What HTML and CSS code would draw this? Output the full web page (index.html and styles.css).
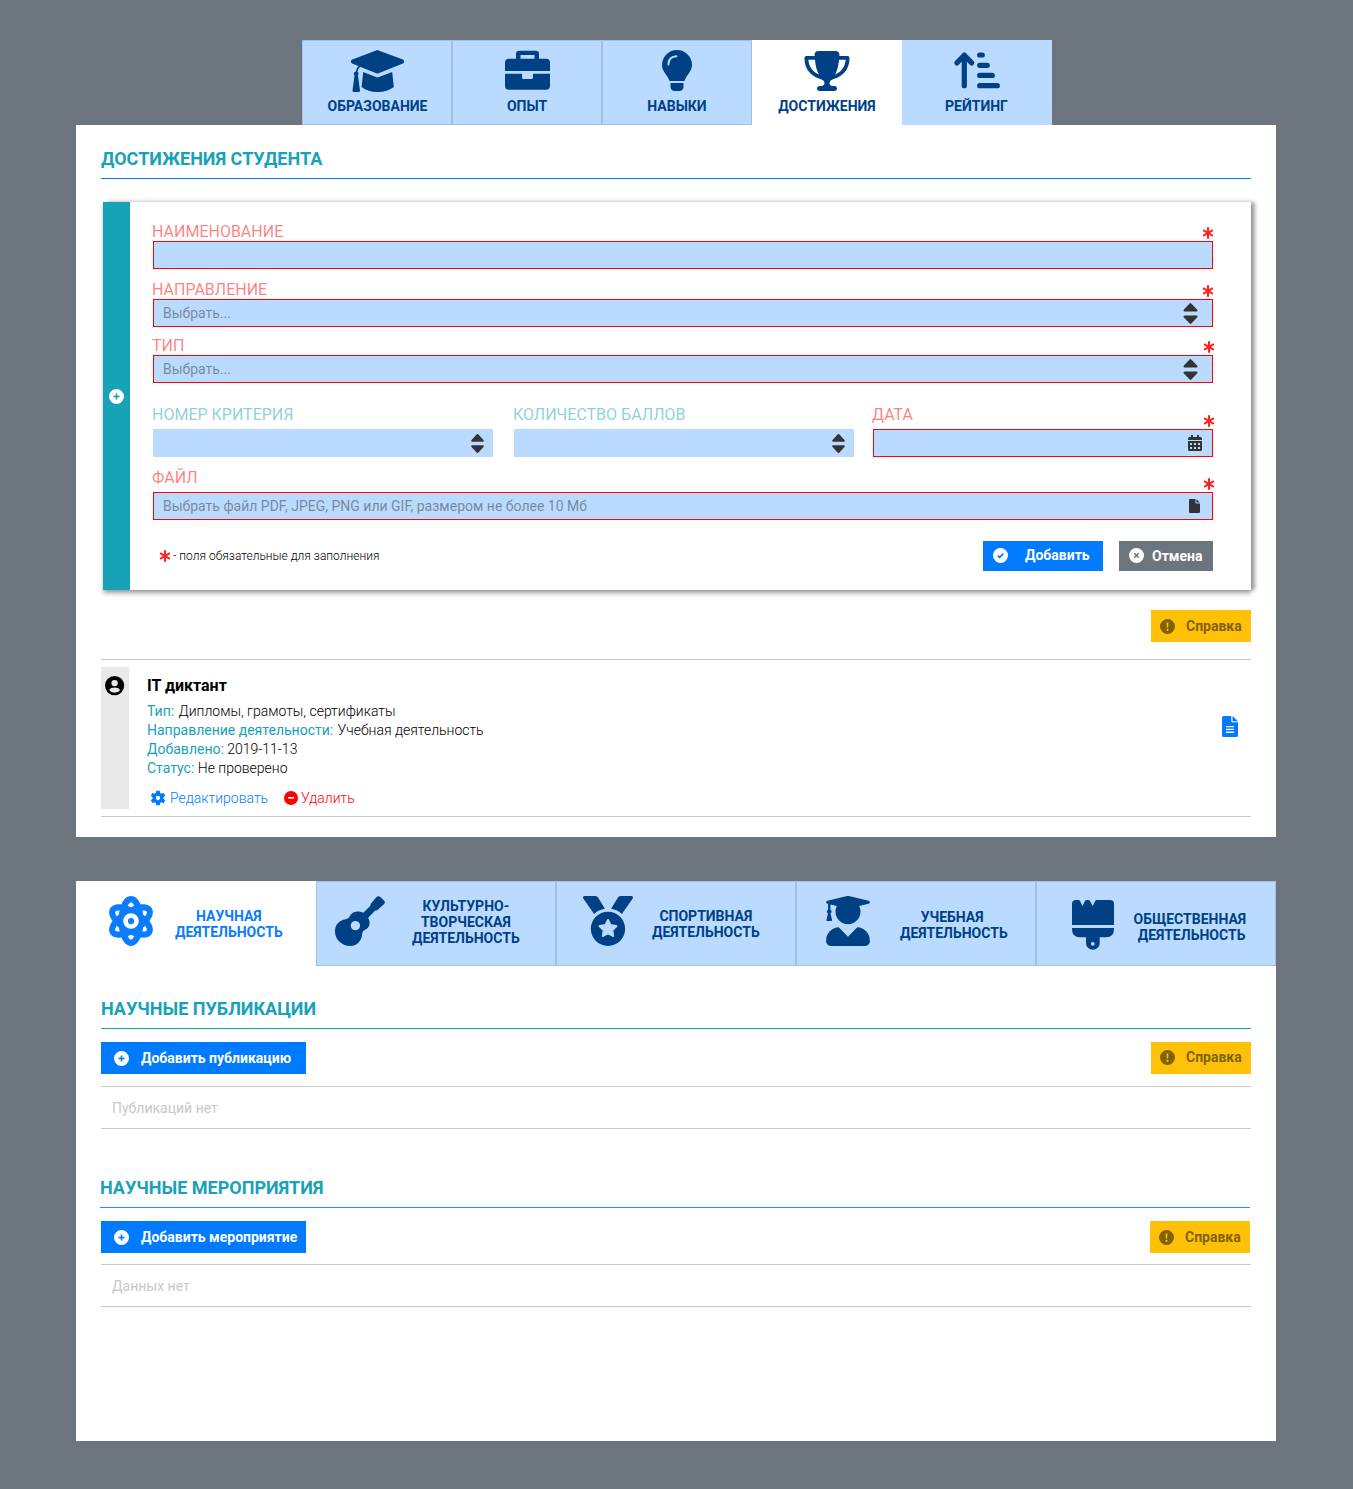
FILE: index.html
```html
<!DOCTYPE html>
<html lang="ru">
<head>
<meta charset="utf-8">
<title>Портфолио студента</title>
<link rel="stylesheet" href="styles.css">
</head>
<body>
<svg class="sprite" width="0" height="0">
  <defs>
    <symbol id="star" viewBox="0 0 12 12"><path d="M6 .3V11.700M1.100 3.200 10.900 8.800M10.900 3.200 1.100 8.800" fill="none" stroke="currentColor" stroke-width="2.100"/></symbol>
    <symbol id="sort" viewBox="0 0 14 21"><path d="M6.200.4Q7-.3 7.800.4L13.600 6.600Q14.600 8.400 13 8.500H1Q-.6 8.400.4 6.600ZM6.200 20.600Q7 21.300 7.800 20.600L13.600 14.400Q14.600 12.600 13 12.500H1Q-.6 12.600.4 14.400Z" fill="#333"/></symbol>
    <symbol id="plus" viewBox="0 0 15 15"><path fill-rule="evenodd" d="M7.500 0a7.500 7.500 0 1 0 0 15a7.500 7.500 0 0 0 0-15ZM6.700 4.400h1.600v2.300h2.300v1.600H8.300v2.300H6.700V8.300H4.400V6.700h2.300Z" fill="currentColor"/></symbol>
    <symbol id="alert" viewBox="0 0 15 15"><path fill-rule="evenodd" d="M7.500 0a7.500 7.500 0 1 0 0 15a7.500 7.500 0 0 0 0-15ZM6.500 3.400h2l-.4 5.200h-1.200ZM7.500 9.700a1.100 1.100 0 1 1 0 2.200a1.100 1.100 0 0 1 0-2.200Z" fill="currentColor"/></symbol>
  </defs>
</svg>

<main class="page">
  <nav class="tabs">
    <a class="tab tab-first"><svg class="tab-icon" viewBox="0 0 56 44"><path d="M28.400 2.600 53.300 12 Q54 12.500 53.300 13L28.400 23 3.700 13Q3 12.500 3.700 12Z" stroke="currentColor" stroke-width="3" stroke-linejoin="round"/><path d="M14.200 23 27 28Q28.500 28.600 30 28L43.200 23 44.800 38Q38.500 43 28.700 43 18.500 43 12.600 38Z"/><path d="M11 17Q8 19 7.400 24" fill="none" stroke="currentColor" stroke-width="1.600"/><circle cx="7.200" cy="24.800" r="2.400"/><path d="M5.500 26.500H9L11 41.500Q11 43 9.500 43H5Q3.300 43 3.500 41.500Z"/></svg><span>ОБРАЗОВАНИЕ</span></a>
    <a class="tab"><svg class="tab-icon" viewBox="0 0 56 44"><path fill-rule="evenodd" d="M17 9.700V5Q17 1.700 20.300 1.700H36.700Q40 1.700 40 5V9.700H47Q51 9.700 51 13.500V22H6V13.500Q6 9.700 10 9.700ZM21.500 6V9.700H35.500V6ZM6 24.700H23V28.500Q23 30 24.500 30H32.500Q34 30 34 28.500V24.700H51V37Q51 40.700 47 40.700H10Q6 40.700 6 37Z"/></svg><span>ОПЫТ</span></a>
    <a class="tab"><svg class="tab-icon" viewBox="0 0 56 44"><path d="M28 1A15 15 0 0 1 43 16C43 23 37 26 35.500 32H20.500C19 26 13 23 13 16A15 15 0 0 1 28 1Z"/><path d="M21.500 34H34.500V38Q34 42 30.500 42H25.500Q22 42 21.500 38Z"/><path d="M19.400 15.500Q19.600 7.600 27.500 7.300" fill="none" stroke="#badbff" stroke-width="1.900" stroke-linecap="round"/></svg><span>НАВЫКИ</span></a>
    <a class="tab tab-active"><svg class="trophy" viewBox="0 0 576 512"><path d="M400 0H176c-26.500 0-48.100 21.800-47.100 48.200c.2 5.300 .4 10.600 .7 15.800H24C10.700 64 0 74.700 0 88c0 92.600 33.500 157 78.500 200.700c44.300 43.100 98.300 64.800 138.100 75.800c23.400 6.500 39.400 26 39.400 45.600c0 20.900-17 37.900-37.900 37.900H192c-17.700 0-32 14.300-32 32s14.300 32 32 32H384c17.700 0 32-14.300 32-32s-14.300-32-32-32H357.900C337 448 320 431 320 410.100c0-19.600 15.900-39.200 39.400-45.600c39.900-11 93.900-32.700 138.200-75.800C542.500 245 576 180.600 576 88c0-13.300-10.700-24-24-24H446.400c.3-5.200 .5-10.400 .7-15.800C448.100 21.800 426.500 0 400 0zM48.900 112h84.400c9.100 90.100 29.200 150.300 51.900 190.600c-24.900-11-50.800-26.500-73.200-48.300c-32-31.100-58-76-63-142.300zM464.100 254.300c-22.400 21.800-48.300 37.300-73.200 48.300c22.700-40.300 42.800-100.500 51.900-190.600h84.400c-5.100 66.300-31.100 111.200-63 142.300z"/></svg><span>ДОСТИЖЕНИЯ</span></a>
    <a class="tab tab-plain"><svg class="tab-icon" viewBox="0 0 56 44"><path d="M15.300 6V36.700M7.900 13.900 15.300 6.300 22.700 13.900M30.700 6H33.300M30.700 16.300H38.300M30.700 26.400H43.300M30.700 36.700H48.300" fill="none" stroke="currentColor" stroke-width="5.200" stroke-linecap="round" stroke-linejoin="round"/></svg><span>РЕЙТИНГ</span></a>
  </nav>

  <section class="panel panel-student">
    <h2 class="heading heading-blue">ДОСТИЖЕНИЯ СТУДЕНТА</h2>
    <div class="card">
      <div class="card-side"><svg width="15" height="15"><use href="#plus"/></svg></div>
      <form class="form">
        <div class="field g12"><div class="head"><label class="req">НАИМЕНОВАНИЕ</label><svg class="star" width="12" height="12"><use href="#star"/></svg></div><div class="input input-req"></div></div>
        <div class="field g10"><div class="head"><label class="req">НАПРАВЛЕНИЕ</label><svg class="star" width="12" height="12"><use href="#star"/></svg></div><div class="input input-req"><span>Выбрать...</span><svg class="sort-big" width="15" height="21"><use href="#sort"/></svg></div></div>
        <div class="field g22"><div class="head"><label class="req">ТИП</label><svg class="star shift" width="12" height="12"><use href="#star"/></svg></div><div class="input input-req"><span>Выбрать...</span><svg class="sort-big" width="15" height="21"><use href="#sort"/></svg></div></div>
        <div class="columns">
          <div class="field"><div class="head tall"><label>НОМЕР КРИТЕРИЯ</label></div><div class="input"><span></span><svg class="sort-small" width="13" height="19"><use href="#sort"/></svg></div></div>
          <div class="field col-points"><div class="head tall"><label>КОЛИЧЕСТВО БАЛЛОВ</label></div><div class="input"><span></span><svg class="sort-small" width="13" height="19"><use href="#sort"/></svg></div></div>
          <div class="field"><div class="head tall"><label class="req">ДАТА</label><svg class="star shift" width="12" height="12"><use href="#star"/></svg></div><div class="input input-req"><span></span><svg class="calendar" width="14" height="16" viewBox="0 0 14 16"><path fill="#333" fill-rule="evenodd" d="M3 0H5V2H9V0H11V2H12.500Q14 2 14 3.500V5H0V3.500Q0 2 1.500 2H3ZM0 6H14V14.500Q14 16 12.500 16H1.500Q0 16 0 14.500ZM2 8V10H4V8ZM6 8V10H8V8ZM10 8V10H12V8ZM2 12V14H4V12ZM6 12V14H8V12ZM10 12V14H12V12Z"/></svg></div></div>
        </div>
        <div class="field"><div class="head tall"><label class="req">ФАЙЛ</label><svg class="star shift" width="12" height="12"><use href="#star"/></svg></div><div class="input input-req"><span>Выбрать файл PDF, JPEG, PNG или GIF, размером не более 10 Мб</span><svg class="file" width="11" height="14" viewBox="0 0 11 14"><path fill="#333" d="M1 0H6.500V3.500Q6.500 4.500 7.500 4.500H11V13Q11 14 10 14H1Q0 14 0 13V1Q0 0 1 0ZM7.400.2 10.800 3.600H7.400Z"/></svg></div></div>
        <div class="form-foot">
          <svg class="star-note" width="12" height="12"><use href="#star"/></svg><span class="note">- поля обязательные для заполнения</span>
          <button type="button" class="btn btn-add"><svg width="15" height="15" viewBox="0 0 15 15"><circle cx="7.500" cy="7.500" r="7.500" fill="#fff"/><path d="M4.700 7.600 6.600 9.400 10.400 5.600" fill="none" stroke="#007bff" stroke-width="1.600"/></svg><span>Добавить</span></button>
          <button type="button" class="btn btn-cancel"><svg width="15" height="15" viewBox="0 0 15 15"><circle cx="7.500" cy="7.500" r="7.500" fill="#fff"/><path d="M5.300 5.300 9.700 9.700M9.700 5.300 5.300 9.700" stroke="#6c757d" stroke-width="1.600"/></svg><span>Отмена</span></button>
        </div>
      </form>
    </div>
    <div class="help-row"><button type="button" class="btn btn-help"><svg width="15" height="15"><use href="#alert"/></svg><span>Справка</span></button></div>
    <article class="item">
      <div class="item-side"><svg width="20" height="20" viewBox="0 0 20 20"><path fill-rule="evenodd" d="M9.600 0a9.600 9.600 0 1 0 0 19.200a9.600 9.600 0 0 0 0-19.200ZM9.600 3.900a3.200 3.200 0 1 1 0 6.400a3.200 3.200 0 0 1 0-6.400ZM4 13.900Q5.600 11.600 9.600 11.600 13.600 11.600 15.200 13.900 13.100 16.700 9.600 16.700 6.100 16.700 4 13.900Z"/></svg></div>
      <div class="item-body">
        <h3>IT диктант</h3>
        <p><b class="wide">Тип:</b> Дипломы, грамоты, сертификаты</p>
        <p><b class="wide">Направление деятельности:</b> Учебная деятельность</p>
        <p><b>Добавлено:</b> 2019-11-13</p>
        <p><b>Статус:</b> Не проверено</p>
        <div class="actions">
          <a class="edit"><svg width="16" height="16" viewBox="1.500 1.500 21 21"><path fill="currentColor" d="M19.140 12.940c.04-.3.06-.61.06-.94c0-.32-.02-.64-.07-.94l2.030-1.580c.18-.14.23-.41.12-.61l-1.920-3.320c-.12-.22-.37-.29-.59-.22l-2.390.96c-.5-.38-1.030-.7-1.620-.94L14.400 2.810c-.04-.24-.24-.41-.48-.41h-3.840c-.24 0-.43.17-.47.41L9.250 5.350C8.660 5.590 8.120 5.920 7.630 6.290L5.240 5.330c-.22-.08-.47 0-.59.22L2.740 8.870C2.620 9.080 2.660 9.340 2.860 9.480l2.030 1.580C4.840 11.360 4.800 11.690 4.800 12s.02.64.07.94l-2.030 1.580c-.18.14-.23.41-.12.61l1.920 3.320c.12.22.37.29.59.22l2.390-.96c.5.38 1.030.7 1.620.94l.36 2.540c.05.24.24.41.48.41h3.840c.24 0 .44-.17.47-.41l.36-2.540c.59-.24 1.130-.56 1.620-.94l2.390.96c.22.08.47 0 .59-.22l1.920-3.320c.12-.22.07-.47-.12-.61L19.140 12.940zM12 14.800c-1.550 0-2.800-1.250-2.800-2.800s1.250-2.800 2.800-2.800s2.800 1.250 2.800 2.800S13.550 14.800 12 14.800z"/></svg><span>Редактировать</span></a>
          <a class="delete"><svg width="14" height="14" viewBox="0 0 14 14"><circle cx="7" cy="7" r="7" fill="red"/><path d="M4 6.800H10" stroke="#fff" stroke-width="1.600"/></svg><span>Удалить</span></a>
        </div>
      </div>
      <svg class="doc" width="16" height="21" viewBox="0 0 16 21"><path fill="#007bff" fill-rule="evenodd" d="M1.500 0H9.300V5Q9.300 6.200 10.500 6.200H16V19.500Q16 21 14.500 21H1.500Q0 21 0 19.500V1.500Q0 0 1.500 0ZM10.500 0 16 5.200H10.500ZM4 10V11.300H12V10ZM4 12.800V14.100H12V12.800ZM4 15.600V16.900H12V15.600Z"/></svg>
    </article>
  </section>

  <section class="panel panel-science">
    <nav class="areas">
      <a class="area area-active"><svg width="44" height="50" viewBox="0 0 448 512"><path d="M223.999 224a32 32 0 1 0 32.008 32A32.064 32.064 0 0 0 223.999 224Zm214.172-96c-10.877-19.500-40.510-50.750-116.275-41.875C300.392 34.875 267.634 0 223.999 0s-76.391 34.875-97.897 86.125C50.337 77.375 20.706 108.500 9.829 128-6.550 157.375-5.175 201.125 34.958 256-5.175 310.875-6.550 354.625 9.829 384c29.131 52.375 101.647 43.625 116.273 41.875C147.608 477.125 180.364 512 223.999 512s76.393-34.875 97.897-86.125c14.629 1.750 87.145 10.500 116.275-41.875C454.550 354.625 453.175 310.875 413.040 256 453.175 201.125 454.550 157.375 438.171 128ZM63.339 352c-4-7.250-.125-24.750 15.004-48.250 6.877 6.500 14.129 12.875 21.881 19.125 1.625 13.750 4 27.125 6.750 40.125C82.345 363.875 67.091 358.625 63.339 352Zm36.885-162.875c-7.752 6.250-15.004 12.625-21.881 19.125-15.129-23.500-19.004-41-15.004-48.250 3.377-6.125 16.379-11.500 37.885-11.500 1.750 0 3.875.375 5.750.375C104.099 162.250 101.849 175.625 100.224 189.125ZM223.999 64c9.502 0 22.256 13.500 33.883 37.250-11.252 3.750-22.504 8-33.883 12.875-11.377-4.875-22.629-9.125-33.883-12.875C201.745 77.500 214.497 64 223.999 64Zm0 384c-9.502 0-22.254-13.500-33.883-37.250 11.254-3.750 22.506-8 33.883-12.875C235.378 402.750 246.630 407 257.882 410.750 246.255 434.500 233.501 448 223.999 448Zm0-112a80 80 0 1 1 80-80A80 80 0 0 1 223.999 336ZM384.659 352c-3.625 6.625-19.004 11.875-43.635 11 2.752-13 5.127-26.375 6.752-40.125 7.752-6.250 15.004-12.625 21.879-19.125C384.784 327.250 388.659 344.750 384.659 352ZM369.655 208.250c-6.875-6.500-14.127-12.875-21.879-19.125-1.625-13.500-3.875-26.875-6.752-40.250 1.875 0 4.002-.375 5.752-.375 21.504 0 34.508 5.375 37.883 11.500C388.659 167.250 384.784 184.750 369.655 208.250Z"/></svg><span>НАУЧНАЯ<br>ДЕЯТЕЛЬНОСТЬ</span></a>
      <a class="area area-culture"><svg width="50" height="50" viewBox="0 0 50 50"><path fill-rule="evenodd" d="M36 7.600 41.300 1.300Q43.200-.7 45.400 1L49 4.600Q50.900 6.600 48.600 8.600L42.500 13.900Q41.500 14.700 40.300 14.600L33.200 21.700Q35.500 26 34 30C32 34.500 27.500 33.500 27.200 37.500C27 44 22.500 50 15.500 50C7 50 0 44 0 35.300C0 29 4 24.700 9.500 23.600C14 22.800 14.300 20.800 15.700 18.700C18.500 14.800 24.500 15 28.300 16.800L35.400 9.700Q35.300 8.600 36 7.600ZM20.400 24.900a4.700 4.700 0 1 0 0 9.400a4.700 4.700 0 0 0 0-9.400Z"/></svg><span>КУЛЬТУРНО-<br>ТВОРЧЕСКАЯ<br>ДЕЯТЕЛЬНОСТЬ</span></a>
      <a class="area area-sport"><svg width="50" height="50" viewBox="0 0 512 512"><path d="M223.750 130.750L154.620 15.540A31.997 31.997 0 0 0 127.180 0H16.030C3.080 0-4.500 14.570 2.920 25.180l111.270 158.960c29.720-27.770 67.520-46.830 109.560-53.390zM495.970 0H384.820c-11.240 0-21.660 5.900-27.440 15.540l-69.130 115.210c42.040 6.560 79.840 25.620 109.560 53.380L509.080 25.180C516.500 14.570 508.920 0 495.970 0zM256 160c-97.200 0-176 78.800-176 176s78.800 176 176 176 176-78.800 176-176-78.800-176-176-176zm92.520 157.260l-37.930 36.960 8.970 52.220c1.600 9.360-8.260 16.510-16.650 12.090L256 393.880l-46.900 24.650c-8.400 4.450-18.250-2.740-16.650-12.090l8.970-52.220-37.930-36.960c-6.820-6.640-3.050-18.230 6.350-19.590l52.430-7.640 23.430-47.520c2.110-4.280 6.190-6.390 10.280-6.390 4.110 0 8.220 2.140 10.330 6.390l23.430 47.520 52.430 7.640c9.400 1.360 13.170 12.950 6.350 19.590z"/></svg><span>СПОРТИВНАЯ<br>ДЕЯТЕЛЬНОСТЬ</span></a>
      <a class="area area-study"><svg width="44" height="50" viewBox="0 0 448 512"><path d="M319.400 320.600L224 416l-95.400-95.400C57.100 323.700 0 382.200 0 454.400v9.600c0 26.500 21.500 48 48 48h352c26.500 0 48-21.500 48-48v-9.600c0-72.200-57.100-130.700-128.600-133.800zM13.600 79.800l6.400 1.500v58.400c-7 4.200-12 11.500-12 20.300 0 8.400 4.600 15.400 11.100 19.700L3.500 242c-1.700 6.900 2.100 14 7.600 14h41.800c5.500 0 9.300-7.100 7.600-14l-15.600-62.300C51.400 175.400 56 168.400 56 160c0-8.800-5-16.100-12-20.300V87.100l66 15.900c-8.600 17.200-14 36.400-14 57 0 70.700 57.300 128 128 128s128-57.300 128-128c0-20.600-5.300-39.800-14-57l96.300-23.200c18.200-4.400 18.200-27.100 0-31.500l-190.400-46c-13-3.100-26.700-3.100-39.700 0L13.600 48.200c-18.100 4.400-18.100 27.100 0 31.600z"/></svg><span>УЧЕБНАЯ&nbsp;<br>ДЕЯТЕЛЬНОСТЬ</span></a>
      <a class="area area-social"><svg width="42" height="50" viewBox="0 0 42 50"><path fill-rule="evenodd" d="M4 0H6.500Q7.500 0 8 1L10.500 6 13 1Q13.500 0 14.500 0H16.500Q17.500 0 18 1L20.700 6 23.200 1Q23.700 0 24.700 0H38Q42 0 42 4V25H0V4Q0 0 4 0ZM0 28H42V29Q42 37.300 34 37.300H27.700V43A6.850 6.850 0 0 1 14 43V37.300H8Q0 37.300 0 29ZM20.800 41.900a1.900 1.900 0 1 0 0 3.800a1.900 1.900 0 0 0 0-3.800Z"/></svg><span>ОБЩЕСТВЕННАЯ<br>&nbsp;ДЕЯТЕЛЬНОСТЬ</span></a>
    </nav>
    <div class="block">
      <h2 class="heading">НАУЧНЫЕ ПУБЛИКАЦИИ</h2>
      <div class="toolbar"><button type="button" class="btn btn-new"><svg width="15" height="15"><use href="#plus"/></svg><span>Добавить публикацию</span></button><button type="button" class="btn btn-help btn-help-up"><svg width="15" height="15"><use href="#alert"/></svg><span>Справка</span></button></div>
      <p class="empty">Публикаций нет</p>
    </div>
    <div class="block block-events">
      <h2 class="heading">НАУЧНЫЕ МЕРОПРИЯТИЯ</h2>
      <div class="toolbar"><button type="button" class="btn btn-new"><svg width="15" height="15"><use href="#plus"/></svg><span>Добавить мероприятие</span></button><button type="button" class="btn btn-help"><svg width="15" height="15"><use href="#alert"/></svg><span>Справка</span></button></div>
      <p class="empty">Данных нет</p>
    </div>
  </section>
</main>
</body>
</html>
```
FILE: styles.css
```css
* { box-sizing: border-box; }
body { margin: 0; background: #6c757d; font-family: Roboto, "Liberation Sans", sans-serif; font-size: 14px; color: #000; }
h2, h3, p { margin: 0; }
svg { display: block; flex: none; overflow: visible; }
.sprite { position: absolute; }
.page { width: 1200px; margin-left: 76px; padding: 40px 0 48px; }

.tabs { display: flex; width: 750px; margin-left: 226px; }
.tab { width: 150px; height: 85px; padding-top: 8px; display: flex; flex-direction: column; align-items: center; gap: 5px; background: #badbff; border: 1px solid #a2bfdf; color: #004085; fill: currentColor; font-weight: 700; line-height: 16px; }
.tab-first span { padding-left: 1px; }
.tab-icon { width: 56px; height: 44px; }
.trophy { width: 46px; height: 40px; margin: 2px 0; }
.tab-active { background: #fff; border-color: #fff; }
.tab-plain { border-color: #badbff; }
.tab-plain span { padding-right: 1px; }

.panel { background: #fff; }
.panel-student { height: 712px; padding: 0 25px; margin-bottom: 44px; }
.heading { height: 54px; padding-top: 23px; font-size: 18px; line-height: 22px; font-weight: 700; color: #17a2b8; border-bottom: 1px solid #17a2b8; }
.heading-blue { border-color: #007bff; }

.card { display: flex; margin: 23px 0 20px 2px; height: 388px; background: #fff; box-shadow: 4px 0 4px rgba(0,0,0,.35), 0 4px 4px rgba(0,0,0,.25); }
.card-side { width: 27px; background: #17a2b8; color: #fff; display: flex; align-items: center; justify-content: center; }
.form { flex: 1; padding: 21px 38px 0 23px; }
.g12 { margin-bottom: 12px; }
.g10 { margin-bottom: 10px; }
.g22 { margin-bottom: 22px; }
.head { display: flex; justify-content: space-between; align-items: flex-end; height: 18px; }
.head label { align-self: flex-start; margin-left: -1px; font-size: 16px; line-height: 18px; font-weight: 400; color: rgba(23,162,184,.5); }
.head label.req { color: rgba(255,0,0,.5); }
.tall { height: 24px; }
.head.tall label { margin-top: 1px; }
.star { color: #ff2020; margin: 0 -.5px 2.5px 0; }
.shift { margin-right: -1.5px; }
.input { display: flex; align-items: center; justify-content: space-between; height: 28px; padding: 0 9px; background: #badbff; border: 1px solid #badbff; color: rgba(51,51,51,.5); }
.input-req { border-color: red; }
.sort-big { margin-right: 5.5px; }
.sort-small { margin-right: -.5px; }
.calendar { margin-right: 1px; }
.file { margin-right: 3px; }
.columns { display: grid; grid-template-columns: 361px 359px 340px; margin-bottom: 11px; }
.columns .field { width: 340px; }
.form-foot { display: flex; align-items: center; height: 30px; margin-top: 21px; padding-left: 6px; }
.star-note { color: #ff2020; margin-right: 2px; }
.note { font-size: 12px; font-weight: 300; margin-right: auto; }

.btn { display: flex; align-items: center; border: 0; padding: 0; height: 32px; font: 700 14px/16px Roboto, sans-serif; color: #fff; }
.btn-add { width: 120px; height: 30px; padding: 0 0 2px 10px; gap: 17px; background: #007bff; margin-right: 16px; }
.btn-cancel { width: 94px; height: 30px; padding-left: 10px; gap: 8px; background: #6c757d; }
.btn-cancel svg { margin-bottom: 1px; }
.btn-help { width: 100px; padding-left: 9px; gap: 11px; background: #ffc107; color: #806104; }
.btn-help-up { padding-bottom: 2px; }
.btn-new { width: 205px; padding-left: 13px; gap: 12px; background: #007bff; }
.help-row { display: flex; justify-content: flex-end; margin-bottom: 17px; }

.item { display: flex; height: 158px; padding: 7px 0; border: solid #c8c8c8; border-width: 1px 0; }
.item-side { width: 28px; padding: 9px 0 0 4px; background: #e9e9e9; }
.item-body { flex: 1; padding: 9px 0 0 18px; font-weight: 300; }
.item-body h3 { font-size: 16px; line-height: 20px; font-weight: 700; margin-bottom: 6px; }
.item-body p { line-height: 19px; }
.item-body b { font-weight: 400; color: #17a2b8; }
.item-body .wide { margin-right: 1px; }
.actions { display: flex; margin-top: 11px; padding-left: 3px; line-height: 18px; }
.actions a { display: flex; align-items: center; }
.edit { color: #007bff; gap: 4px; margin-right: 16px; }
.delete { color: red; gap: 3px; }
.doc { margin: 49px 13px 0 0; }

.panel-science { height: 560px; }
.areas { display: flex; }
.area { width: 240px; height: 85px; padding: 14px 0 0 0; display: flex; background: #badbff; border: 1px solid #a2bfdf; color: #004085; fill: currentColor; font-weight: 700; line-height: 16px; text-align: center; }
.area-active { background: #fff; border-color: #fff; color: #0a7cff; padding-left: 32px; }
.area-active span { margin: 12px 0 0 22px; }
.area-culture { padding-left: 18px; }
.area-culture span { margin: 2px 0 0 27px; }
.area-sport { padding-left: 26px; }
.area-sport span { margin: 12px 0 0 19px; }
.area-study { padding-left: 29px; }
.area-study span { margin: 13px 0 0 30px; }
.area-social { padding: 18px 0 0 35px; }
.area-social span { margin: 11px 0 0 19.5px; }
.block { padding: 9px 25px 0; }
.toolbar { display: flex; justify-content: space-between; margin: 13px 0 12px; }
.empty { height: 43px; padding-left: 11px; line-height: 42px; color: #c8c8c8; border: solid #c8c8c8; border-width: 1px 0; }
.block-events { padding-top: 25px; }
.block-events .heading { margin: 0 1px 0 -1px; }
.block-events .toolbar { margin: 13px 1px 11px 0; }
```
